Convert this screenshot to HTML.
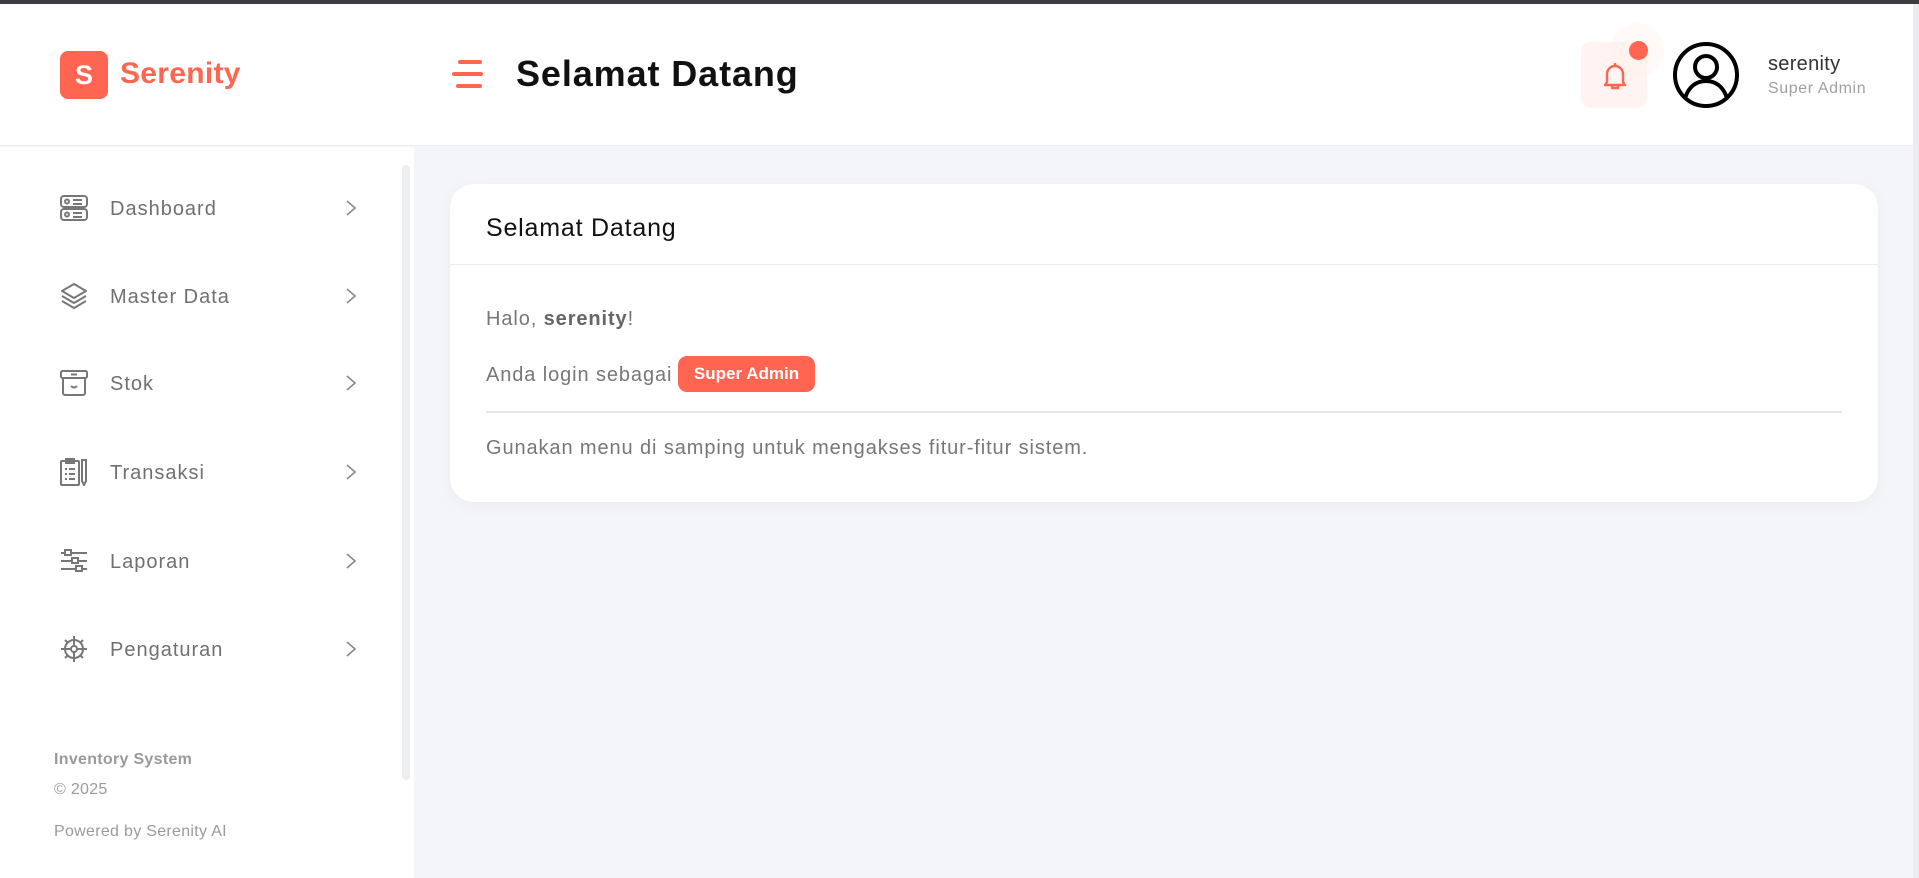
<!DOCTYPE html>
<html><head><meta charset="utf-8"><style>
*{margin:0;padding:0;box-sizing:border-box}
body{width:1919px;height:878px;overflow:hidden;background:#f4f5f9;font-family:"Liberation Sans",sans-serif;position:relative}
.topbar{position:absolute;left:0;top:0;width:1919px;height:4px;background:#3b3b40}
.header{position:absolute;left:0;top:4px;width:1913px;height:142px;background:#fff;border-bottom:1px solid #ececf0}
.abs{position:absolute}
.logo{left:60px;top:47px;width:48px;height:48px;background:#ff6550;border-radius:8px;color:#fff;font-weight:700;font-size:27px;text-align:center;line-height:48px}
.brand{left:120px;top:53px;font-size:30px;font-weight:700;color:#ff6550;letter-spacing:.3px}
.ham span{position:absolute;left:0;height:4px;border-radius:2px;background:#ff6550}
.title{left:516px;top:49px;font-size:36px;font-weight:700;color:#111;letter-spacing:.9px}
.sidebar{position:absolute;left:0;top:147px;width:414px;height:731px;background:#fff}
.item{position:absolute;left:60px;height:30px;width:300px}
.item svg{position:absolute;left:0;top:0}
.item .t{position:absolute;left:50px;top:4px;font-size:20px;color:#707070;letter-spacing:1px}
.item .c{position:absolute;left:285px;top:4px}
.foot{position:absolute;left:54px;color:#9a9a9a;font-size:16px;letter-spacing:.3px}
.card{position:absolute;left:450px;top:184px;width:1428px;height:318px;background:#fff;border-radius:24px;box-shadow:0 4px 16px rgba(0,0,0,.04)}
.ct{position:absolute;left:36px;top:30px;font-size:25px;color:#111;letter-spacing:.8px}
.txt{position:absolute;left:36px;font-size:20px;color:#777;letter-spacing:.9px}
</style></head><body>
<div class="topbar"></div>
<div class="header">
  <div class="abs logo">S</div>
  <div class="abs brand">Serenity</div>
  <div class="abs ham" style="left:452px;top:56px;width:31px;height:30px">
    <span style="top:0;left:6px;width:24px"></span>
    <span style="top:12px;width:31px"></span>
    <span style="top:24px;left:4px;width:26px"></span>
  </div>
  <div class="abs title">Selamat Datang</div>
  <div class="abs" style="left:1581px;top:38px;width:66px;height:66px;background:#fff4f2;border-radius:10px"></div>
  <div class="abs" style="left:1610px;top:19px;width:54px;height:54px;background:rgba(255,240,236,.35);border-radius:50%"></div>
  <svg class="abs" style="left:1601px;top:57px" width="28" height="30" viewBox="0 0 28 30"><path d="M14 2v3M6 21V13a8 8 0 0 1 16 0v8l2 3H4z M11 24v3h6v-3" fill="none" stroke="#ff6550" stroke-width="2.4" stroke-linejoin="round"/></svg>
  <div class="abs" style="left:1629px;top:37px;width:19px;height:19px;background:#ff6550;border-radius:50%"></div>
  <svg class="abs" style="left:1672px;top:37px" width="68" height="68" viewBox="0 0 68 68"><circle cx="34" cy="34" r="31" fill="none" stroke="#000" stroke-width="4"/><circle cx="34" cy="26" r="11" fill="none" stroke="#000" stroke-width="4"/><path d="M13 57c4-12 12-17 21-17s17 5 21 17" fill="none" stroke="#000" stroke-width="4"/></svg>
  <div class="abs" style="left:1768px;top:49px;font-size:20px;color:#333;letter-spacing:.3px">serenity</div>
  <div class="abs" style="left:1768px;top:76px;font-size:16px;color:#a0a0a0;letter-spacing:.6px">Super Admin</div>
</div>
<div class="abs" style="left:1913px;top:4px;width:6px;height:874px;background:#ececf0"></div>
<div class="sidebar">
  <div class="abs" style="left:402px;top:18px;width:8px;height:615px;background:#eceef0;border-radius:4px"></div>
  <div class="item" style="top:47px"><svg width="28" height="28" viewBox="0 0 28 28" fill="none" stroke="#777" stroke-width="2"><rect x="1" y="2" width="26" height="11" rx="3"/><rect x="1" y="15" width="26" height="11" rx="3"/><circle cx="7" cy="7.5" r="2"/><circle cx="7" cy="20.5" r="2"/><path d="M13 6h9M13 10h9M13 19h9M13 23h9"/></svg><div class="t">Dashboard</div><svg class="c" width="12" height="20" viewBox="0 0 12 20"><path d="M2 3l8 7-8 7" fill="none" stroke="#888" stroke-width="1.6"/></svg></div>
  <div class="item" style="top:135px"><svg width="28" height="28" viewBox="0 0 28 28" fill="none" stroke="#777" stroke-width="2" stroke-linejoin="round"><path d="M14 2L2 9l12 7 12-7z"/><path d="M2 14l12 7 12-7"/><path d="M2 19l12 7 12-7"/></svg><div class="t">Master Data</div><svg class="c" width="12" height="20" viewBox="0 0 12 20"><path d="M2 3l8 7-8 7" fill="none" stroke="#888" stroke-width="1.6"/></svg></div>
  <div class="item" style="top:222px"><svg width="28" height="28" viewBox="0 0 28 28" fill="none" stroke="#777" stroke-width="2"><rect x="1" y="2" width="26" height="7" rx="1.5"/><path d="M3 9v15a2 2 0 0 0 2 2h18a2 2 0 0 0 2-2V9M11 17c2 2 4 2 6 0M11 5.5h6"/></svg><div class="t">Stok</div><svg class="c" width="12" height="20" viewBox="0 0 12 20"><path d="M2 3l8 7-8 7" fill="none" stroke="#888" stroke-width="1.6"/></svg></div>
  <div class="item" style="top:311px"><svg width="28" height="28" viewBox="0 0 28 28" fill="none" stroke="#777" stroke-width="2"><rect x="1" y="3" width="18" height="24" rx="1"/><rect x="6" y="1" width="8" height="4"/><path d="M5 11h2M9 11h6M5 16h2M9 16h6M5 21h2M9 21h6"/><path d="M22 2h4v21l-2 4-2-4z"/></svg><div class="t">Transaksi</div><svg class="c" width="12" height="20" viewBox="0 0 12 20"><path d="M2 3l8 7-8 7" fill="none" stroke="#888" stroke-width="1.6"/></svg></div>
  <div class="item" style="top:400px"><svg width="28" height="28" viewBox="0 0 28 28" fill="none" stroke="#777" stroke-width="2"><path d="M1 6h26M1 14h26M1 22h26"/><rect x="5" y="3" width="6" height="5" fill="#fff"/><rect x="12" y="11" width="6" height="5" fill="#fff"/><rect x="16" y="19" width="6" height="5" fill="#fff"/></svg><div class="t">Laporan</div><svg class="c" width="12" height="20" viewBox="0 0 12 20"><path d="M2 3l8 7-8 7" fill="none" stroke="#888" stroke-width="1.6"/></svg></div>
  <div class="item" style="top:488px"><svg width="28" height="28" viewBox="0 0 28 28" fill="none" stroke="#777" stroke-width="2"><circle cx="14" cy="14" r="9"/><circle cx="14" cy="14" r="3"/><path d="M14 1v4M14 23v4M1 14h4M23 14h4M5 5l3 3M20 20l3 3M5 23l3-3M20 8l3-3M14 11V5M14 17v6M11 14H5M17 14h6"/></svg><div class="t">Pengaturan</div><svg class="c" width="12" height="20" viewBox="0 0 12 20"><path d="M2 3l8 7-8 7" fill="none" stroke="#888" stroke-width="1.6"/></svg></div>
  <div class="foot" style="top:604px;font-weight:700">Inventory System</div>
  <div class="foot" style="top:634px">© 2025</div>
  <div class="foot" style="top:676px">Powered by Serenity AI</div>
</div>
<div class="card">
  <div class="ct">Selamat Datang</div>
  <div class="abs" style="left:0;top:80px;width:1428px;height:1px;background:#ececec"></div>
  <div class="txt" style="top:124px">Halo, <b style="color:#666">serenity</b>!</div>
  <div class="txt" style="top:180px">Anda login sebagai</div>
  <div class="abs" style="left:228px;top:172px;width:137px;height:36px;background:#ff6550;border-radius:9px;color:#fff;font-weight:700;font-size:17px;text-align:center;line-height:36px">Super Admin</div>
  <div class="abs" style="left:36px;top:227px;width:1356px;height:2px;background:#e6e6e6"></div>
  <div class="txt" style="top:253px">Gunakan menu di samping untuk mengakses fitur-fitur sistem.</div>
</div>
</body></html>
